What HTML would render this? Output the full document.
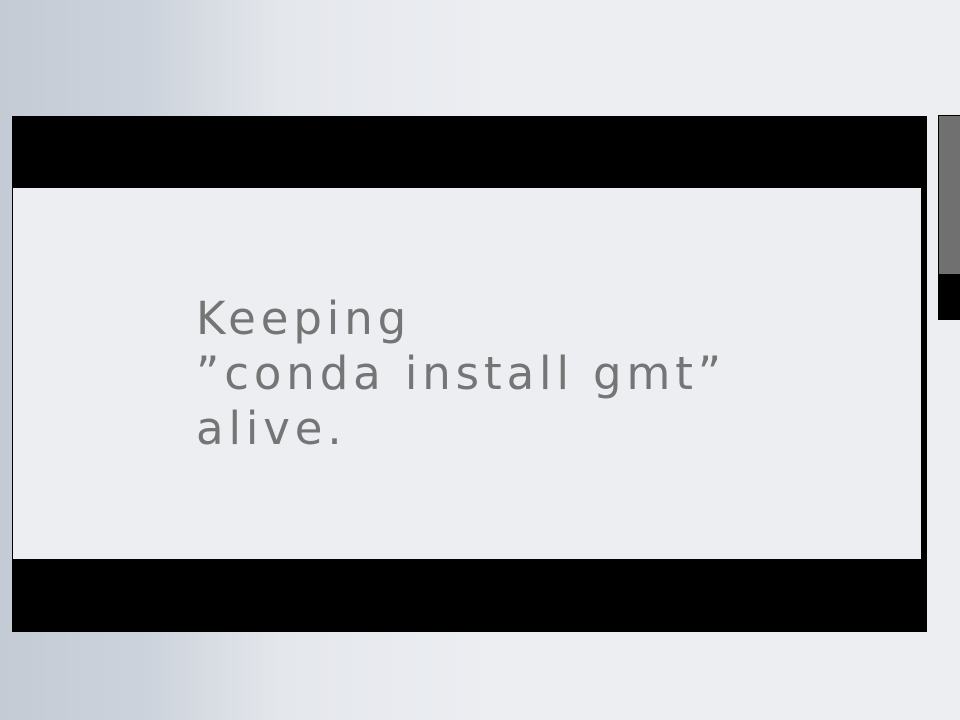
<!DOCTYPE html>
<html><head><style>
html,body{margin:0;padding:0;width:960px;height:720px;overflow:hidden}
body{background:linear-gradient(90deg,#c4cbd5 0px,#cdd3dc 150px,#e4e7ec 280px,#eceef2 500px,#eceef2 100%);position:relative;font-family:"Liberation Sans",sans-serif}
.frame{position:absolute;left:12px;top:116px;width:915px;height:516px;background:#000}
.inner{position:absolute;left:13px;top:188px;width:908px;height:371px;background:#eceef2}
.side{position:absolute;left:938px;top:115px;width:22px;height:205px;background:#000}
.side .g{position:absolute;left:1px;top:1px;right:0;height:158px;background:#707070}
.txt{position:absolute;left:196px;top:291px;font-family:"DejaVu Sans",sans-serif;font-size:45px;line-height:55px;color:#757575;letter-spacing:4.9px;white-space:pre}
</style></head><body>
<div class="frame"></div>
<div class="inner"></div>
<div class="side"><div class="g"></div></div>
<div class="txt">Keeping
”conda install gmt”
alive.</div>
</body></html>
